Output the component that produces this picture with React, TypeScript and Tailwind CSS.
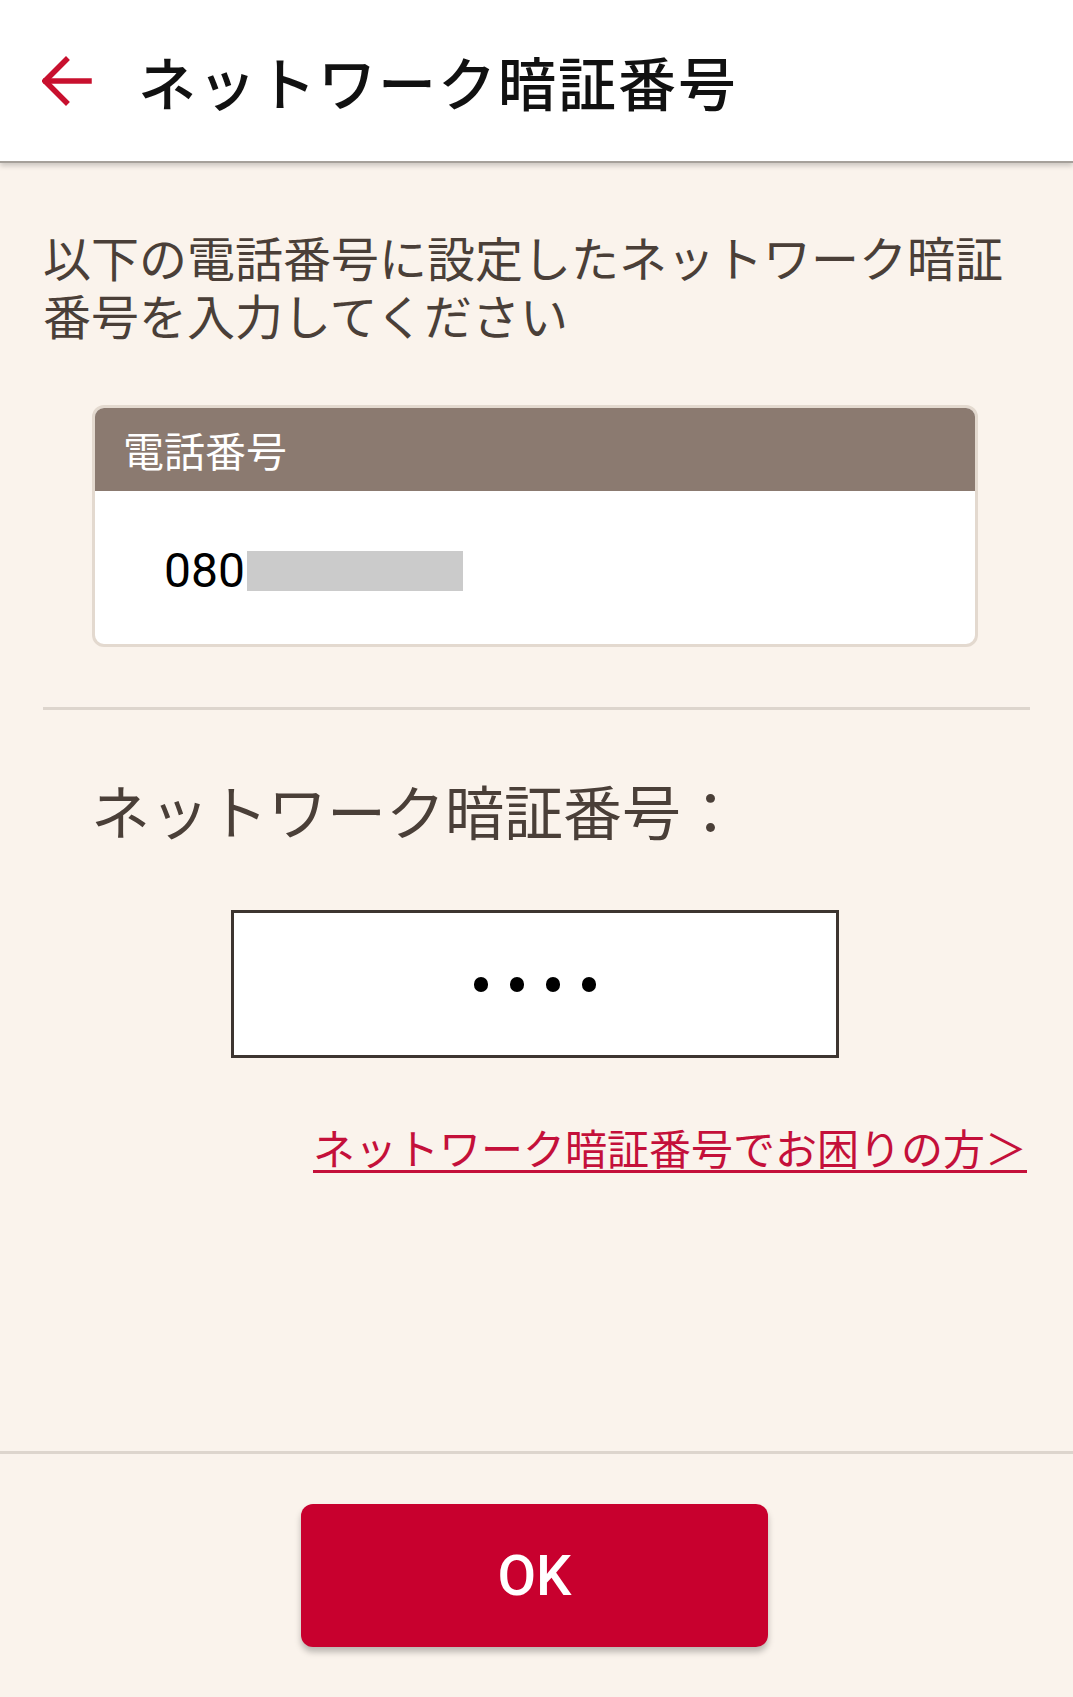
import React from 'react';

const jp = { fontFamily: '"Noto Sans CJK JP", "Noto Sans", sans-serif' };

const BackArrow = () => (
    <svg width="50" height="50" viewBox="0 0 50 50" fill="none" stroke="#c8102e" strokeWidth="5.5" strokeLinecap="square">
        <path d="M47 25H4" />
        <path d="M24 4L3 25L24 46" strokeLinejoin="miter" />
    </svg>
);

const App = () => {
    return (
        <div className="min-h-[1697px] flex flex-col bg-[#faf3ec]" style={jp}>
            <header className="relative z-10 h-[163px] bg-white flex items-center border-b-2 border-[#a5a09a] shadow-[0_3px_5px_rgba(0,0,0,0.18)]">
                <div className="pl-[42px] w-[138px] flex items-center">
                    <BackArrow />
                </div>
                <h1 className="text-[58px] leading-none font-medium text-[#111] tracking-[2px]">ネットワーク暗証番号</h1>
            </header>

            <main className="flex-1 flex flex-col px-[43px] pt-[64px]">
                <p className="text-[48px] leading-[58px] text-[#4a3f38]">
                    以下の電話番号に設定したネットワーク暗証番号を入力してください
                </p>

                <div className="mt-[62px] ml-[49px] w-[886px] rounded-[12px] border-[3px] border-[#e3d9cf] overflow-hidden bg-white">
                    <div className="h-[83px] bg-[#8b7a70] flex items-center pl-[28px]">
                        <span className="text-[41px] text-white leading-none">電話番号</span>
                    </div>
                    <div className="h-[153px] flex items-center pl-[69px] pt-[6px]">
                        <span className="text-[48px] text-black leading-none" style={{ fontFamily: 'Roboto, "Noto Sans", sans-serif' }}>
                            080
                        </span>
                        <div className="ml-[2px] w-[216px] h-[40px] bg-[#cbcbcb]" />
                    </div>
                </div>

                <div className="mt-[60px] h-[3px] bg-[#ddd5cd]" />

                <div className="mt-[66px] pl-[48px] text-[59px] leading-[68px] text-[#4a3f38]">ネットワーク暗証番号：</div>

                <div className="mt-[66px] self-center ml-[-4px] w-[608px] h-[148px] border-[3px] border-[#3d3530] bg-white flex items-center justify-center gap-[22px]">
                    <span className="w-[14px] h-[15px] rounded-full bg-black" />
                    <span className="w-[14px] h-[15px] rounded-full bg-black" />
                    <span className="w-[14px] h-[15px] rounded-full bg-black" />
                    <span className="w-[14px] h-[15px] rounded-full bg-black" />
                </div>

                <div className="mt-[64px] flex justify-end pr-[3px]">
                    <a href="#" className="text-[42px] leading-[50px] text-[#c4103a] underline decoration-[3px] underline-offset-[5px]">
                        ネットワーク暗証番号でお困りの方＞
                    </a>
                </div>
            </main>

            <footer className="border-t-[3px] border-[#ddd5cd] pt-[50px] pb-[50px] flex justify-center">
                <button className="ml-[-4px] w-[467px] h-[143px] rounded-[12px] bg-[#c8002e] text-white text-[56px] font-medium shadow-[0_5px_6px_rgba(0,0,0,0.25)]" style={{ fontFamily: 'Roboto, "Noto Sans", sans-serif' }}>
                    OK
                </button>
            </footer>
        </div>
    );
};

export default App;
